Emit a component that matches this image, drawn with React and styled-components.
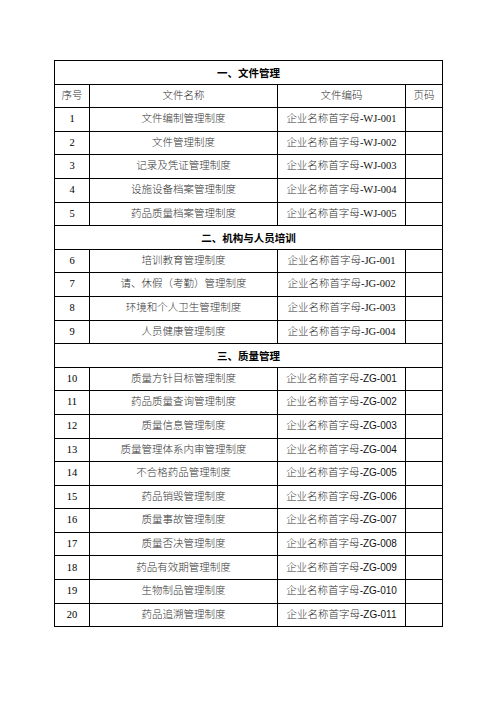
import { Fragment } from "react";
import styled, { createGlobalStyle } from "styled-components";

const GlobalStyle = createGlobalStyle`
  html, body {
    margin: 0;
    padding: 0;
    background: #fff;
  }
  body {
    font-family: "Liberation Serif", "Noto Sans CJK SC", serif;
  }
`;

const Page = styled.div`
  width: 496px;
  height: 702px;
  padding: 60px 0 0 54px;
  box-sizing: border-box;
`;

const Table = styled.table`
  border-collapse: collapse;
  table-layout: fixed;
  width: 388px;
  border: 1px solid #000;
`;

const Row = styled.tr`
  height: 23.6px;
`;

const Cell = styled.td`
  border: 1px solid #000;
  padding: 0;
  text-align: center;
  vertical-align: middle;
  font-size: 10.5px;
  line-height: 1;
  color: #333;
  font-family: "Liberation Serif", "Noto Sans CJK SC", serif;
  font-weight: 300;
  white-space: nowrap;
`;

const Num = styled.span`
  color: #000;
  font-size: 10.5px;
  font-weight: 400;
`;

const SectionCell = styled.td`
  border: 1px solid #000;
  text-align: center;
  vertical-align: middle;
  font-family: "Noto Sans CJK SC", sans-serif;
  font-weight: 700;
  font-size: 10.5px;
  color: #000;
  padding: 0;
`;

const Code = styled.span`
  color: #111;
  font-weight: 400;
  font-family: ${({ $sans }) =>
    $sans ? '"Liberation Sans", sans-serif' : '"Liberation Serif", serif'};
  font-size: ${({ $sans }) => ($sans ? "10px" : "10.5px")};
`;

const sections = [
  {
    title: "一、文件管理",
    prefix: "WJ",
    header: true,
    items: [
      "文件编制管理制度",
      "文件管理制度",
      "记录及凭证管理制度",
      "设施设备档案管理制度",
      "药品质量档案管理制度",
    ],
  },
  {
    title: "二、机构与人员培训",
    prefix: "JG",
    items: [
      "培训教育管理制度",
      "请、休假（考勤）管理制度",
      "环境和个人卫生管理制度",
      "人员健康管理制度",
    ],
  },
  {
    title: "三、质量管理",
    prefix: "ZG",
    sans: true,
    items: [
      "质量方针目标管理制度",
      "药品质量查询管理制度",
      "质量信息管理制度",
      "质量管理体系内审管理制度",
      "不合格药品管理制度",
      "药品销毁管理制度",
      "质量事故管理制度",
      "质量否决管理制度",
      "药品有效期管理制度",
      "生物制品管理制度",
      "药品追溯管理制度",
    ],
  },
];

export default function App() {
  let n = 0;
  return (
    <Page>
      <GlobalStyle />
      <Table>
        <colgroup>
          <col style={{ width: 35 }} />
          <col style={{ width: 188 }} />
          <col style={{ width: 128 }} />
          <col style={{ width: 37 }} />
        </colgroup>
        <tbody>
          {sections.map((s) => (
            <Fragment key={s.title}>
              <Row>
                <SectionCell colSpan={4}>{s.title}</SectionCell>
              </Row>
              {s.header && (
                <Row>
                  <Cell>序号</Cell>
                  <Cell>文件名称</Cell>
                  <Cell>文件编码</Cell>
                  <Cell>页码</Cell>
                </Row>
              )}
              {s.items.map((name, i) => {
                n += 1;
                const code = `-${s.prefix}-${String(i + 1).padStart(3, "0")}`;
                return (
                  <Row key={name}>
                    <Cell>
                      <Num>{n}</Num>
                    </Cell>
                    <Cell>{name}</Cell>
                    <Cell>
                      企业名称首字母
                      <Code $sans={s.sans}>{code}</Code>
                    </Cell>
                    <Cell />
                  </Row>
                );
              })}
            </Fragment>
          ))}
        </tbody>
      </Table>
    </Page>
  );
}
